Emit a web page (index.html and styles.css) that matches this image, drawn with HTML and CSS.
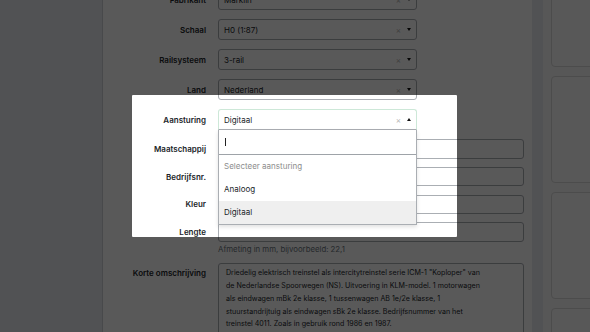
FILE: index.html
```html
<!DOCTYPE html>
<html lang="nl">
<head>
  <meta charset="UTF-8" />
  <meta name="viewport" content="width=device-width, initial-scale=1.0"/>
  <title>Model bewerken</title>
  <link rel="stylesheet" href="styles.css">
</head>
<body>

  <div class="layout">
    <aside class="side"></aside>

    <!-- FORM CARD -->
    <main class="card">
      <form class="form">
        <div class="row row-select">
          <label>Fabrikant</label>
          <div class="select"><span class="value">Märklin</span><span class="clear">×</span><span class="arrow"></span></div>
        </div>
        <div class="row row-select">
          <label>Schaal</label>
          <div class="select"><span class="value">H0 (1:87)</span><span class="clear">×</span><span class="arrow"></span></div>
        </div>
        <div class="row row-select">
          <label>Railsysteem</label>
          <div class="select"><span class="value">3-rail</span><span class="clear">×</span><span class="arrow"></span></div>
        </div>
        <div class="row row-select">
          <label>Land</label>
          <div class="select"><span class="value">Nederland</span><span class="clear">×</span><span class="arrow"></span></div>
        </div>
        <div class="row row-select">
          <label>Aansturing</label>
          <div class="select open">
            <span class="value">Digitaal</span><span class="clear">×</span><span class="arrow"></span>
            <div class="dropdown">
              <div class="search"><span class="caret"></span></div>
              <ul class="options">
                <li class="placeholder">Selecteer aansturing</li>
                <li>Analoog</li>
                <li class="selected">Digitaal</li>
              </ul>
            </div>
          </div>
        </div>
        <div class="row row-input">
          <label>Maatschappij</label>
          <input type="text" />
        </div>
        <div class="row row-input">
          <label>Bedrijfsnr.</label>
          <input type="text" />
        </div>
        <div class="row row-input">
          <label>Kleur</label>
          <input type="text" />
        </div>
        <div class="row row-input row-help">
          <label>Lengte</label>
          <input type="text" />
        </div>
        <p class="help">Afmeting in mm, bijvoorbeeld: 22,1</p>
        <div class="row row-text">
          <label>Korte omschrijving</label>
          <div class="textarea">Driedelig elektrisch treinstel als intercitytreinstel serie ICM-1 "Koploper" van
de Nederlandse Spoorwegen (NS). Uitvoering in KLM-model. 1 motorwagen
als eindwagen mBk 2e klasse, 1 tussenwagen AB 1e/2e klasse, 1
stuurstandrijtuig als eindwagen sBk 2e klasse. Bedrijfsnummer van het
treinstel 4011. Zoals in gebruik rond 1986 en 1987.</div>
        </div>
      </form>
    </main>

    <!-- SIDE PANEL -->
    <div class="panel">
      <div class="panel-card"></div>
      <div class="panel-card"></div>
      <div class="panel-card"></div>
      <div class="panel-card"></div>
    </div>
  </div>

  <!-- Tour spotlight -->
  <div class="spotlight"></div>

</body>
</html>
```

FILE: styles.css
```css
* {
  box-sizing: border-box;
}

body {
  margin: 0;
  font-family: Inter, 'Noto Sans', sans-serif;
  background: #e7eaf0;
  color: #212529;
  overflow: hidden;
  height: 332px;
}

.layout {
  display: flex;
  align-items: flex-start;
}

.side {
  width: 102px;
  flex-shrink: 0;
}

.card {
  width: 430px;
  flex-shrink: 0;
  height: 400px;
  background: #fff;
  border-left: 1px solid #cfd2d8;
}

.form {
  margin-top: -11px;
  padding-left: 29px;
}

.row {
  display: grid;
  grid-template-columns: 74px 306px;
  column-gap: 12px;
  align-items: center;
}

.row label {
  text-align: right;
  font-size: 8px;
  font-weight: 600;
}

.row-select {
  margin-bottom: 9px;
}

.row-input {
  margin-bottom: 8.3px;
}

.row-help {
  margin-bottom: 0;
}

/* select2-like control */
.select {
  position: relative;
  width: 199px;
  height: 21px;
  border: 1px solid #aaaeb3;
  border-radius: 3px;
  display: flex;
  align-items: center;
  font-size: 8px;
}

.select .value {
  flex: 1;
  padding-left: 5px;
}

.select .clear {
  color: #b5b5b5;
  font-size: 8px;
  margin-right: 6px;
}

.select .arrow {
  width: 0;
  height: 0;
  margin-right: 5px;
  border-left: 2.5px solid transparent;
  border-right: 2.5px solid transparent;
  border-top: 3px solid #111;
}

.select.open {
  border-color: #cde8d8;
  border-bottom-color: #aaaeb3;
  border-radius: 3px 3px 0 0;
}

.select.open .arrow {
  border-top: none;
  border-bottom: 3px solid #111;
}

.dropdown {
  position: absolute;
  top: calc(100% + 1px);
  left: -1px;
  right: -1px;
  background: #fff;
  border: 1px solid #aaaeb3;
  border-top: none;
  box-shadow: 0 2px 4px rgba(0, 0, 0, 0.12);
  z-index: 5;
}

.search {
  height: 24.5px;
  border-bottom: 1px solid #9ea3a8;
  display: flex;
  align-items: center;
  padding-left: 6px;
}

.caret {
  width: 1px;
  height: 8px;
  background: #222;
}

.options {
  list-style: none;
  margin: 0;
  padding: 0;
}

.options li {
  height: 23px;
  line-height: 23px;
  padding-left: 5px;
  font-size: 8px;
}

.options .placeholder {
  color: #8d8d8d;
}

.options .selected {
  background: #efefef;
}

input {
  width: 306px;
  height: 19.5px;
  border: 1px solid #aaaeb3;
  border-radius: 3px;
  margin: 0;
}

.help {
  margin: 2px 0 9px 86px;
  font-size: 7.8px;
  line-height: 10px;
  color: #6c757d;
}

.row-text {
  align-items: start;
}

.row-text label {
  padding-top: 4px;
  line-height: 12.6px;
}

.textarea {
  height: 90px;
  border: 1px solid #aaaeb3;
  border-radius: 3px;
  padding: 3.5px 7px;
  font-size: 7.1px;
  line-height: 12.7px;
  white-space: pre;
}

.panel {
  margin-left: 11px;
  width: 60px;
  flex-shrink: 0;
  height: 332px;
  background: #f9f9f9;
  padding: 0 0 0 8px;
  display: flex;
  flex-direction: column;
  gap: 8.8px;
}

.panel-card {
  flex-shrink: 0;
  height: 107.5px;
  border: 1px solid #d9d9d9;
  border-radius: 4px;
  background: #fcfcfc;
}

.panel-card:first-child {
  margin-top: -40.8px;
}

.spotlight {
  position: absolute;
  left: 131.7px;
  top: 95px;
  width: 325px;
  height: 141.7px;
  border-radius: 1px;
  box-shadow: 0 0 0 2000px rgba(0, 0, 0, 0.65);
  pointer-events: none;
  z-index: 10;
}
```
